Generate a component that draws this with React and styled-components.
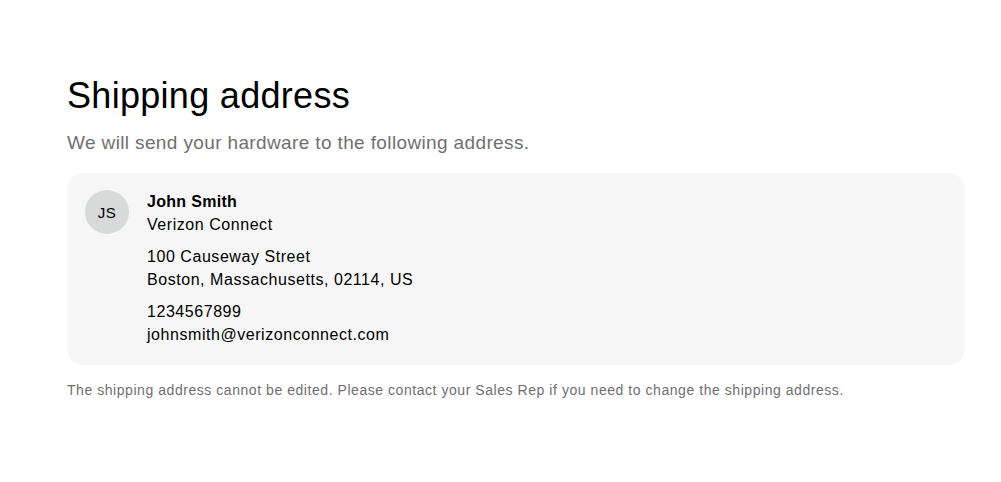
import React from 'react';
import styled, {createGlobalStyle} from 'styled-components';

const GlobalStyle = createGlobalStyle`
  body {
    margin: 0;
    background: #ffffff;
    font-family: 'Liberation Sans', Arial, sans-serif;
    color: #000000;
  }
`

const Page = styled.main`
  padding: 74px 36px 0 67px;
`

const Title = styled.h1`
  margin: 0;
  font-size: 36px;
  font-weight: 400;
  line-height: 44px;
  letter-spacing: 0.3px;
`

const Subtitle = styled.p`
  margin: 13px 0 0;
  font-size: 19px;
  line-height: 24px;
  color: #6f6f6f;
  letter-spacing: 0.37px;
`

const Card = styled.section`
  display: flex;
  gap: 18px;
  margin-top: 18px;
  padding: 17px 20px 19px 18px;
  background: #f6f6f6;
  border-radius: 16px;
`

const Avatar = styled.div`
  flex: none;
  width: 44px;
  height: 44px;
  border-radius: 50%;
  background: #d8dada;
  display: flex;
  align-items: center;
  justify-content: center;
  font-size: 15px;
  letter-spacing: 0.6px;
`

const Details = styled.div`
  display: flex;
  flex-direction: column;
  gap: 9px;
`

const Group = styled.div`
  display: flex;
  flex-direction: column;
`

const Line = styled.span`
  font-size: 16px;
  line-height: 23px;
  letter-spacing: ${(props) => (props.$bold ? '0.3px' : '0.55px')};
  font-weight: ${(props) => (props.$bold ? 700 : 400)};
`

const Note = styled.p`
  margin: 16px 0 0;
  font-size: 14px;
  line-height: 18px;
  color: #6f6f6f;
  letter-spacing: 0.55px;
`

const groups = [
	[{text: 'John Smith', bold: true}, {text: 'Verizon Connect'}],
	[{text: '100 Causeway Street'}, {text: 'Boston, Massachusetts, 02114, US'}],
	[{text: '1234567899'}, {text: 'johnsmith@verizonconnect.com'}],
]

function App() {
	return (<>
		<GlobalStyle/>
		<Page>
			<Title>Shipping address</Title>
			<Subtitle>We will send your hardware to the following address.</Subtitle>
			<Card>
				<Avatar>JS</Avatar>
				<Details>
					{groups.map((group, i) => (
						<Group key={i}>
							{group.map((line) => (
								<Line key={line.text} $bold={line.bold}>{line.text}</Line>
							))}
						</Group>
					))}
				</Details>
			</Card>
			<Note>The shipping address cannot be edited. Please contact your Sales Rep if you need to change the shipping address.</Note>
		</Page>
	</>);
}

export default App;
